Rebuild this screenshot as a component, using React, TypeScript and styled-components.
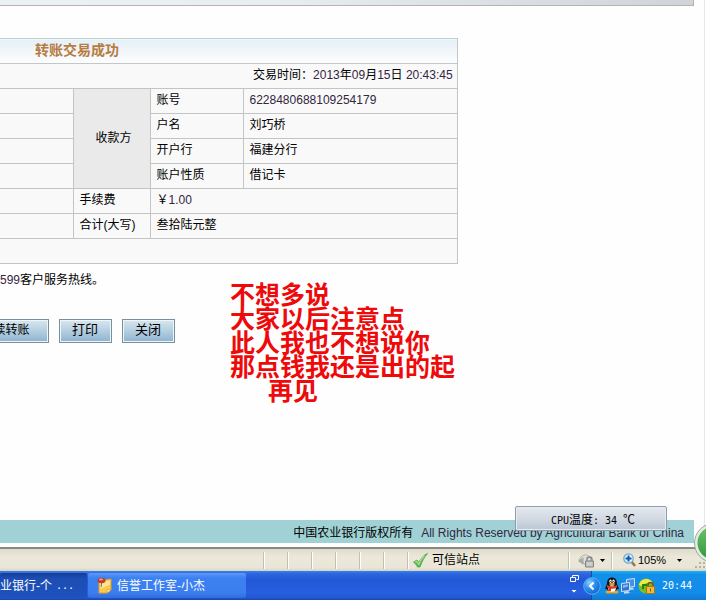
import React from "react";
import styled, { createGlobalStyle, css } from "styled-components";

const Global = createGlobalStyle`
  * { box-sizing: border-box; }
  body {
    margin: 0;
    background: #fefefe;
    color: #000;
    font: 12px/16px "Liberation Sans", "Noto Sans CJK SC", sans-serif;
  }
  button { font-family: inherit; color: inherit; }
`;

const Screen = styled.div`
  position: relative;
  display: flex;
  flex-direction: column;
  min-height: 100vh;
  overflow: hidden;
`;

const Page = styled.main`
  position: relative;
  flex: 1;
  display: flex;
  flex-direction: column;
  margin-right: 1px;
  padding-bottom: 4px;
  border-right: 1px solid #e9e9e2;
`;

const TopStrip = styled.div`
  height: 6px;
  margin-right: 10px;
  background: linear-gradient(90deg, #eaf2f3 0%, #e6eef1 40%, #cfd4da 100%);
  border-right: 1px solid #b4b4b4;
  border-bottom: 1px solid #b4b4b4;
`;

const Receipt = styled.table`
  width: 65%;
  margin-top: 32px;
  border-collapse: collapse;
  table-layout: fixed;
  background: #f9f9f9;
`;

const Title = styled.th`
  height: 25px;
  padding: 0 0 2px 35px;
  border: 1px solid #c3c7c9;
  border-top-color: #b5d5d5;
  border-left: 0;
  background: linear-gradient(#e5eff6, #fdfdfd);
  color: #b67c3e;
  font-size: 14px;
  line-height: 20px;
  text-align: left;
`;

const Cell = styled.td<{ $align?: "right" }>`
  height: 25px;
  padding: 0 4px 2px 6px;
  border: 1px solid #c4c4c4;
  text-align: ${(p) => p.$align ?? "left"};
  white-space: nowrap;
  &:first-child[data-edge] { border-left: 0; }
`;

const Party = styled.th`
  padding: 0 0 2px 4px;
  border: 1px solid #c4c4c4;
  background: #eaeaea;
  font-weight: 400;
`;

const Digits = styled.span`
  color: #33263f;
`;

const Hotline = styled.p`
  margin: 8px 0 0;
`;

const Actions = styled.div`
  display: flex;
  gap: 10px;
  margin: 31px 0 0 -25px;
`;

const ActionButton = styled.button<{ $wide?: boolean }>`
  width: ${(p) => (p.$wide ? "74px" : "53px")};
  height: 24px;
  padding: 0 1px 2px 0;
  border: 1px solid #78909c;
  box-shadow: inset 0 0 0 1px #eef5f9;
  background: linear-gradient(#d9e7ef, #b3cee0 50%, #8eb3d1);
  font-size: ${(p) => (p.$wide ? "12px" : "13px")};
  line-height: 16px;
`;

const Note = styled.div`
  position: absolute;
  top: 281px;
  left: 230px;
  color: #ee0a0a;
  font: 700 25px/24px "Noto Sans CJK SC", sans-serif;
  white-space: nowrap;
`;

const NoteLine = styled.div<{ $indent?: boolean }>`
  padding-left: ${(p) => (p.$indent ? "38px" : "0")};
`;

const Footer = styled.footer`
  display: flex;
  justify-content: flex-end;
  gap: 8px;
  margin: auto 10px 0 0;
  padding: 5px 10px 2px;
  background: #a0d2d5;
`;

const StatusBar = styled.div`
  display: flex;
  align-items: center;
  height: 24px;
  border-top: 2px solid #8b897c;
  background: linear-gradient(#dedbcc, #ebe8d9 35%, #e9e6d7 85%, #d8d4c4);
`;

const StatusCell = styled.div<{ $width?: number; $pad?: number; $gap?: number }>`
  display: flex;
  align-items: center;
  ${(p) =>
    p.$width
      ? css`
          flex: 0 0 ${p.$width}px;
          border-left: 1px solid #c3c0b0;
          box-shadow: inset 1px 0 #fff;
        `
      : css`
          flex: 1;
        `}
  height: 17px;
  gap: ${(p) => p.$gap ?? 4}px;
  padding-left: ${(p) => p.$pad ?? 5}px;
`;

const ZoomValue = styled.span`
  font-size: 11px;
`;

const PlainButton = styled.button<{ $push?: boolean }>`
  display: flex;
  align-items: center;
  justify-content: center;
  padding: 0;
  border: 0;
  background: none;
  margin-left: ${(p) => (p.$push ? "9px" : "0")};
`;

const TaskBar = styled.nav`
  display: flex;
  height: 29px;
  background: linear-gradient(#3a80ec 0, #2b66e0 10%, #2258d6 30%, #265fdf 75%, #2359d2 92%, #1b44ad);
  color: #fff;
`;

const TaskButton = styled.button<{ $active?: boolean }>`
  display: flex;
  align-items: center;
  gap: 4px;
  width: ${(p) => (p.$active ? "87px" : "158px")};
  height: 25px;
  margin: 2px 1px 0 0;
  padding: ${(p) => (p.$active ? "0" : "0 0 0 9px")};
  border: 0;
  border-radius: 2px;
  background: ${(p) =>
    p.$active
      ? "linear-gradient(#153d92, #1c4db4 20%, #1e52bc)"
      : "linear-gradient(#5c9af8, #3c80f2 20%, #3b7eef 80%, #2f6cdd)"};
  && { color: #fff; }
  font-size: 12px;
  line-height: 16px;
  white-space: nowrap;
`;

const LangControls = styled.div`
  display: flex;
  align-items: flex-start;
  margin-left: auto;
  padding: 3px 12px 0 0;
`;

const Tray = styled.div`
  display: flex;
  align-items: center;
  gap: 2px;
  padding-right: 14px;
  background: linear-gradient(#19b0f6 0, #1290e8 12%, #128cea 75%, #1278cf);
  border-left: 1px solid #0e4fb0;
`;

const TrayToggle = styled.button`
  display: flex;
  margin-left: -9px;
  padding: 0;
  border: 0;
  background: none;
`;

const TrayIcons = styled.div`
  display: flex;
  align-items: center;
  gap: 2px;
  margin-left: 2px;
`;

const Clock = styled.time`
  margin-left: 4px;
  font: 10px/16px "DejaVu Sans Mono", monospace;
`;

const CpuBadge = styled.div`
  position: absolute;
  right: 39px;
  bottom: 69px;
  width: 152px;
  height: 25px;
  padding-left: 4px;
  border: 1px solid #8f9cab;
  border-radius: 2px;
  box-shadow: inset 0 0 0 1px #e6ebf1;
  background: linear-gradient(#e3e8ee, #d3dae3 50%, #b9c7d5);
  font: 12px/23px "Noto Sans CJK SC", sans-serif;
  text-align: center;
  white-space: pre;
`;

const Mono = styled.span`
  font: 10px/16px "DejaVu Sans Mono", monospace;
`;

const Orb = styled.svg`
  position: absolute;
  right: -28px;
  bottom: 37px;
`;

const Arrow = ({ color = "#000" }: { color?: string }) => (
  <svg width="5" height="3" viewBox="0 0 5 3" aria-hidden="true">
    <path d="M0 0h5L2.5 3z" fill={color} />
  </svg>
);

const CheckIcon = () => (
  <svg width="15" height="15" viewBox="0 0 15 15" aria-hidden="true">
    <path d="M.5 9L4 7l1.800 2.500C8 5.500 10.500 2 14.500 .5c-3.500 4-5.500 8-7.500 13.500H4.500C3.500 12 2 10 .5 9z" fill="#62bb52" stroke="#4aa544" strokeWidth=".8" />
    <path d="M2.300 8.900l1.400-.6 2.100 3C7.500 7.500 9.500 4.500 11.500 2.800" fill="none" stroke="#a8df96" strokeWidth="1.200" />
  </svg>
);

const LockIcon = () => (
  <svg width="16" height="15" viewBox="0 0 16 15" aria-hidden="true">
    <path d="M1 7C3 2 8 0 12 4l1 3-6 5-2-3z" fill="#dededa" stroke="#b3b3ae" />
    <path d="M0 8l5.500-4v8z" fill="#a9a9a5" />
    <path d="M9 8V6.500a2.500 2.500 0 015 0V8" fill="none" stroke="#858583" strokeWidth="1.400" />
    <path d="M7.500 8h8v6h-8z" fill="#b6b6b3" stroke="#858583" />
    <path d="M8.500 10h6M8.500 12h6" stroke="#e5e5e2" />
  </svg>
);

const ZoomIcon = () => (
  <svg width="13" height="14" viewBox="0 0 13 14" aria-hidden="true">
    <path d="M8 8l4 5" stroke="#a2733e" strokeWidth="2.500" />
    <circle cx="5.500" cy="5.500" r="4.700" fill="#e5f4ff" stroke="#6fa9d4" strokeWidth="1.300" />
    <path d="M5.500 2.500v6M2.500 5.500h6" stroke="#1259a3" strokeWidth="2" />
  </svg>
);

const NoteIcon = () => (
  <svg width="16" height="17" viewBox="0 0 16 17" aria-hidden="true">
    <path d="M2 4l12-2v11l-4 3H2z" fill="#fbc94c" stroke="#e79f26" />
    <path d="M3 5l10-1.500v4L3 12z" fill="#ffe394" />
    <path d="M10 16v-3.500l4 .5z" fill="#fff0b2" stroke="#d99520" strokeWidth=".6" />
    <path d="M5 4l-1 6" stroke="#8c6540" />
    <ellipse cx="4.500" cy="3.500" rx="4" ry="2.800" fill="#bb3d2b" />
    <ellipse cx="4" cy="2.500" rx="2.200" ry="1.100" fill="#ee9883" />
  </svg>
);

const RestoreIcon = () => (
  <svg width="9" height="20" viewBox="0 0 9 20" aria-hidden="true">
    <path d="M2.500 3V1.500h6v4h-2" fill="none" stroke="#fff" />
    <path d="M.5 3.500h5v4h-5z" fill="none" stroke="#fff" />
    <path d="M1.500 16h5L4 18.500z" fill="#fff" />
  </svg>
);

const ToggleIcon = () => (
  <svg width="18" height="18" viewBox="0 0 18 18" aria-hidden="true">
    <defs>
      <radialGradient id="toggle" cx=".35" cy=".3" r=".75">
        <stop offset="0" stopColor="#8ad0ff" />
        <stop offset=".5" stopColor="#2c8df0" />
        <stop offset="1" stopColor="#1464cd" />
      </radialGradient>
    </defs>
    <circle cx="9" cy="9" r="8.300" fill="url(#toggle)" stroke="#56b0f6" />
    <path d="M10.500 5.500L7 9l3.500 3.500" fill="none" stroke="#fff" strokeWidth="2" />
  </svg>
);

const PenguinIcon = () => (
  <svg width="14" height="17" viewBox="1 0 14 17" aria-hidden="true">
    <ellipse cx="5" cy="15" rx="3.500" ry="1.500" fill="#f2a51c" />
    <ellipse cx="11" cy="15" rx="3.500" ry="1.500" fill="#f2a51c" />
    <path d="M3 7C3 2.500 5 .5 8 .5S13 2.500 13 7l2 5h-1.800C12 15 4 15 2.800 12H1z" fill="#151515" />
    <ellipse cx="8" cy="11.500" rx="3.800" ry="3.300" fill="#fff" />
    <ellipse cx="6.500" cy="4.300" rx="1.200" ry="1.700" fill="#fff" />
    <ellipse cx="9.500" cy="4.300" rx="1.200" ry="1.700" fill="#fff" />
    <circle cx="6.800" cy="4.500" r=".6" />
    <circle cx="9.200" cy="4.500" r=".6" />
    <ellipse cx="8" cy="7" rx="3" ry="1" fill="#f6ae1d" />
    <path d="M3 8c3 1.800 7 1.800 10 0v2.500c-2 1-4 1.300-6 1.200V14H4.500v-3L3 10.500z" fill="#e03425" />
  </svg>
);

const NetworkIcon = () => (
  <svg width="15" height="16" viewBox="0 0 15 16" aria-hidden="true">
    <path d="M5.500 1.500l8-1v8l-8 1z" fill="#4d8fde" stroke="#cbe4fb" />
    <path d="M8 10l4-.5 1 2-5 .5z" fill="#c8daee" />
    <path d="M.5 5.500l8-1v8l-8 1z" fill="#3675cf" stroke="#cbe4fb" />
    <path d="M2 7l5-.6v2L2 10z" fill="#83bcf2" />
    <path d="M3 13.500l4-.5 2 2-6 .7z" fill="#c8daee" />
  </svg>
);

const GuardIcon = () => (
  <svg width="18" height="16" viewBox="0 0 18 16" aria-hidden="true">
    <circle cx="8" cy="8" r="7.500" fill="#78bd21" />
    <path d="M1 7C2 2 7 0 11 1.500c2 .8 3.500 2 4 4C10 4 6 5 5 9z" fill="#e7ed49" />
    <path d="M4 6h5v2H6v3H4z" fill="#2d7d1c" />
    <path d="M10 9V7a2.500 2.500 0 015 0v2" fill="none" stroke="#79560b" strokeWidth="1.500" />
    <path d="M8.500 8.500h8v7h-8z" fill="#f0b93a" stroke="#a97413" />
    <path d="M12.500 10.500v3" stroke="#7c520a" />
  </svg>
);

const Grip = styled.svg`
  align-self: flex-end;
  margin-left: auto;
`;

const ReceiptTable = () => (
  <Receipt>
    <colgroup>
      <col width="73" />
      <col width="77" />
      <col width="93" />
      <col />
    </colgroup>
    <tbody>
      <tr><Title colSpan={4}>转账交易成功</Title></tr>
      <tr>
        <Cell data-edge colSpan={4} $align="right">
          交易时间：<Digits>2013</Digits>年<Digits>09</Digits>月<Digits>15</Digits>日 <Digits>20:43:45</Digits>
        </Cell>
      </tr>
      <tr>
        <Cell data-edge />
        <Party rowSpan={4}>收款方</Party>
        <Cell>账号</Cell>
        <Cell><Digits>6228480688109254179</Digits></Cell>
      </tr>
      <tr><Cell data-edge /><Cell>户名</Cell><Cell>刘巧桥</Cell></tr>
      <tr><Cell data-edge /><Cell>开户行</Cell><Cell>福建分行</Cell></tr>
      <tr><Cell data-edge /><Cell>账户性质</Cell><Cell>借记卡</Cell></tr>
      <tr>
        <Cell data-edge />
        <Cell>手续费</Cell>
        <Cell colSpan={2}>￥<Digits>1.00</Digits></Cell>
      </tr>
      <tr>
        <Cell data-edge />
        <Cell>合计(大写)</Cell>
        <Cell colSpan={2}>叁拾陆元整</Cell>
      </tr>
      <tr><Cell data-edge colSpan={4} /></tr>
    </tbody>
  </Receipt>
);

export default function App() {
  return (
    <Screen>
      <Global />
      <Page>
        <TopStrip />
        <ReceiptTable />
        <Hotline><Digits>599</Digits>客户服务热线。</Hotline>
        <Actions>
          <ActionButton type="button" $wide>续转账</ActionButton>
          <ActionButton type="button">打印</ActionButton>
          <ActionButton type="button">关闭</ActionButton>
        </Actions>
        <Note>
          <NoteLine>不想多说</NoteLine>
          <NoteLine>大家以后注意点</NoteLine>
          <NoteLine>此人我也不想说你</NoteLine>
          <NoteLine>那点钱我还是出的起</NoteLine>
          <NoteLine $indent>再见</NoteLine>
        </Note>
        <Footer>
          <span>中国农业银行版权所有</span>
          <Digits>All Rights Reserved by Agricultural Bank of China</Digits>
        </Footer>
      </Page>

      <StatusBar>
        <StatusCell />
        {[0, 1, 2, 3, 4, 5].map((n) => (
          <StatusCell key={n} $width={24} />
        ))}
        <StatusCell $width={161}>
          <CheckIcon />
          可信站点
        </StatusCell>
        <StatusCell $width={43} $pad={9} $gap={6}>
          <PlainButton type="button" aria-label="安全报告"><LockIcon /></PlainButton>
          <PlainButton type="button" aria-label="安全选项"><Arrow /></PlainButton>
        </StatusCell>
        <StatusCell $width={95} $pad={11} $gap={2}>
          <PlainButton type="button" aria-label="缩放"><ZoomIcon /></PlainButton>
          <ZoomValue>105%</ZoomValue>
          <PlainButton type="button" aria-label="缩放级别" $push><Arrow /></PlainButton>
          <Grip width="11" height="11" viewBox="0 0 11 11" aria-hidden="true">
            <path d="M8 0h2v2H8zM4 4h2v2H4zM8 4h2v2H8zM0 8h2v2H0zM4 8h2v2H4zM8 8h2v2H8z" fill="#b7b39f" />
          </Grip>
        </StatusCell>
      </StatusBar>

      <TaskBar>
        <TaskButton type="button" $active>业银行-个<Mono>...</Mono></TaskButton>
        <TaskButton type="button"><NoteIcon />信誉工作室-小杰</TaskButton>
        <LangControls>
          <PlainButton type="button" aria-label="还原语言栏"><RestoreIcon /></PlainButton>
        </LangControls>
        <Tray>
          <TrayToggle type="button" aria-label="显示隐藏的图标"><ToggleIcon /></TrayToggle>
          <TrayIcons>
            <PenguinIcon />
            <NetworkIcon />
            <GuardIcon />
          </TrayIcons>
          <Clock>20:44</Clock>
        </Tray>
      </TaskBar>

      <CpuBadge><Mono>CPU</Mono>温度<Mono>: 34 </Mono>℃</CpuBadge>
      <Orb width="40" height="40" viewBox="0 0 40 40" aria-hidden="true">
        <defs>
          <linearGradient id="orb" x2="0" y2="1">
            <stop offset="0" stopColor="#6fc26b" />
            <stop offset="1" stopColor="#2f983a" />
          </linearGradient>
        </defs>
        <circle cx="20" cy="20" r="18" fill="url(#orb)" stroke="#e4ece3" strokeWidth="3" />
        <circle cx="20" cy="20" r="19.500" fill="none" stroke="#9aa79c" />
      </Orb>
    </Screen>
  );
}
